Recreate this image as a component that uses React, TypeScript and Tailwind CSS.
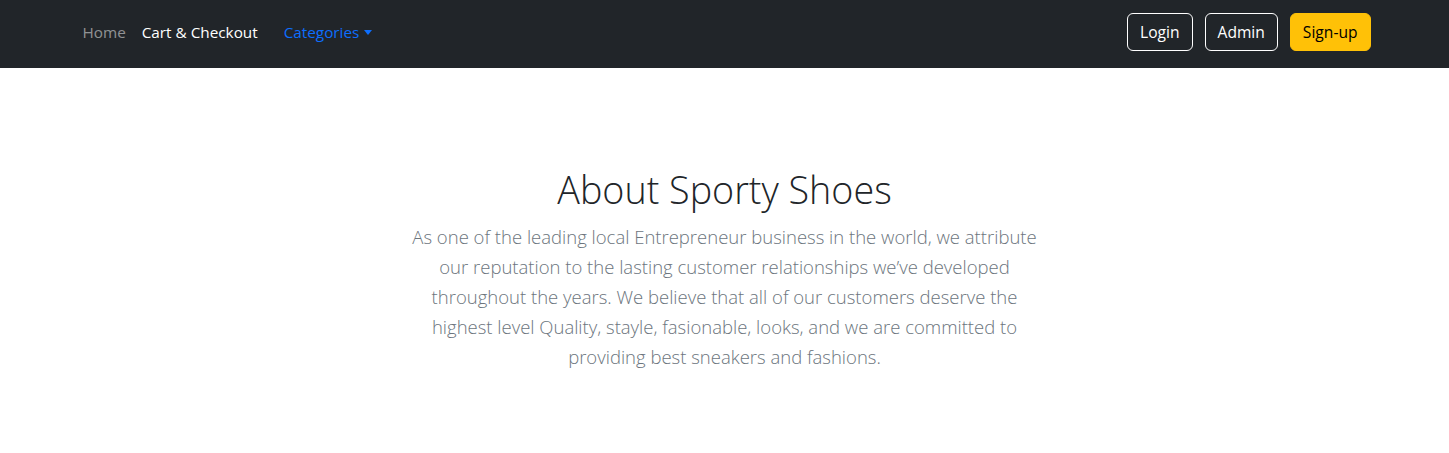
import { useState } from "react";

const links = [
  { id: "home", label: "Home", muted: true },
  { id: "cart", label: "Cart & Checkout", muted: false },
];

function Navbar() {
  const [open, setOpen] = useState(false);

  return (
    <header className="bg-[#212529] h-[68px] w-full">
      <div className="max-w-[1320px] mx-auto px-3 pb-1 h-full flex items-center justify-between">
        <nav className="flex items-center -ml-0.5 text-[15.3px]">
          {links.map((link) => (
            <a
              key={link.id}
              href="#"
              className={`px-2 py-2 leading-6 ${link.muted ? "text-white/50" : "text-white"}`}
            >
              {link.label}
            </a>
          ))}
          <button
            className="ml-2.5 px-2 py-2 leading-6 text-[#0d6efd] flex items-center"
            onClick={() => setOpen(!open)}
          >
            Categories
            <span className="ml-[5px] inline-block w-0 h-0 border-x-[4.5px] border-x-transparent border-t-[5px] border-t-[#0d6efd]" />
          </button>
        </nav>

        <div className="flex items-center gap-3 mr-0.5 text-[15.6px]">
          <button className="h-[38px] px-3 rounded-md border border-white text-white leading-6">
            Login
          </button>
          <button className="h-[38px] px-3 rounded-md border border-white text-white leading-6">
            Admin
          </button>
          <button className="h-[38px] px-3 rounded-md border border-[#ffc107] bg-[#ffc107] text-black leading-6">
            Sign-up
          </button>
        </div>
      </div>
    </header>
  );
}

export default function App() {
  return (
    <div className="min-h-[453px] bg-white font-['Open_Sans',sans-serif] text-base">
      <Navbar />
      <section className="pt-[98px] text-center">
        <h1 className="text-[37.7px] leading-[48px] font-light text-[#212529] mb-2">
          About Sporty Shoes
        </h1>
        <p className="max-w-[636px] mx-auto text-[18.5px] leading-[30px] font-light text-[#6c757d]">
          As one of the leading local Entrepreneur business in the world, we attribute our
          reputation to the lasting customer relationships we’ve developed throughout the
          years. We believe that all of our customers deserve the highest level Quality,
          stayle, fasionable, looks, and we are committed to providing best sneakers and
          fashions.
        </p>
      </section>
    </div>
  );
}
